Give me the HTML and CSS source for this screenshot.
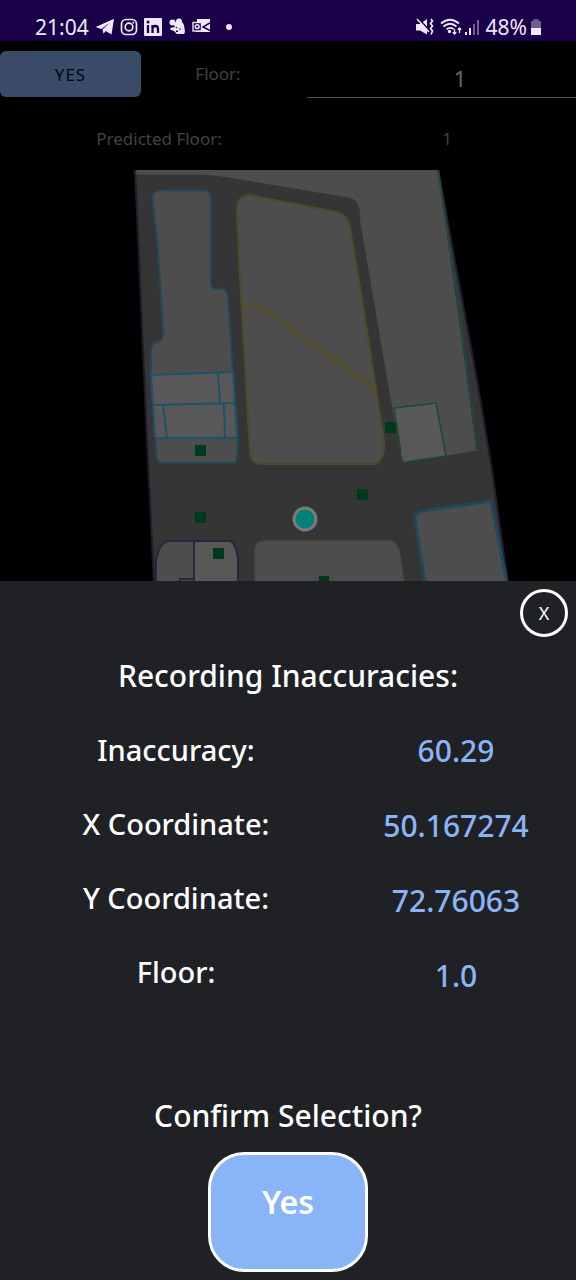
FILE: index.html
```html
<!DOCTYPE html>
<html lang="en">
<head>
<meta charset="utf-8">
<meta name="viewport" content="width=device-width, initial-scale=1">
<title>Recording Inaccuracies</title>
<link rel="stylesheet" href="styles.css">
</head>
<body>
<header class="status">
  <div class="status-left">
    <span class="clock">21:04</span>
    <svg class="icon" viewBox="0 0 18 18"><path d="M0 9 18 1 15.500 16.500 9.700 13 7.500 15.800 6.500 11.500 14 4.500 5 10.800Z" fill="currentColor"/><path d="M0 9 18 1 5.500 11Z" fill="currentColor"/></svg>
    <svg class="icon" viewBox="0 0 18 18" fill="none" stroke="currentColor" stroke-width="1.700"><rect x="1.500" y="1.500" width="15" height="15" rx="4.500"/><circle cx="9" cy="9" r="3.800"/><circle cx="13.300" cy="4.700" r=".6" fill="currentColor" stroke-width="1"/></svg>
    <svg class="icon" viewBox="0 0 18 18"><rect width="18" height="18" rx="1" fill="currentColor"/><g fill="none" stroke="#190048" stroke-width="2.300"><path d="M4 7V15M8.500 7V15M8.500 11Q8.500 8 11.300 8 14 8 14 11V15"/></g><circle cx="4" cy="4" r="1.500" fill="#190048"/></svg>
    <svg class="icon" viewBox="0 0 18 18" fill="currentColor"><circle cx="4.500" cy="4.500" r="3"/><circle cx="11" cy="3.500" r="3"/><path d="M5 5 9 4 13 5 16 7 17 14 16 16H9L6 13 3 12 2 10 7 9Z"/><circle cx="12.500" cy="7" r="3"/><g fill="#190048"><circle cx="8.500" cy="9.500" r=".8"/><circle cx="12" cy="11" r=".8"/><path d="M8 12.500H10V14H8Z"/></g></svg>
    <svg class="icon" viewBox="0 0 18 18"><path d="M5 1H18V14H4V12H9V4H5Z" fill="currentColor"/><rect x="1" y="4.500" width="8.500" height="8.500" fill="#190048" stroke="currentColor" stroke-width="1.400"/><circle cx="5.200" cy="8.700" r="1.900" fill="none" stroke="currentColor" stroke-width="1.500"/><path d="M18 5 11 9 18 12.500" fill="none" stroke="#190048" stroke-width="1.500"/></svg>
    <span class="dot"></span>
  </div>
  <div class="status-right">
    <svg class="mute" viewBox="0 0 18 18"><path d="M0 6H4L11 1V16.500L4 12.500H0Z" fill="currentColor"/><path d="M2 0 13 12" stroke="#190048" stroke-width="1.600"/><path d="M1 1 13 14" stroke="currentColor" stroke-width="1.500"/><path d="M15 1 16.500 3 14.500 5.500 16.500 8 14.500 10.500 16.500 13 15 16.500" fill="none" stroke="currentColor" stroke-width="1.700"/></svg>
    <svg class="wifi" viewBox="0 0 22 18" fill="none" stroke="currentColor" stroke-width="1.800"><path d="M1 5.500Q10 -2 19 5.500M3.500 8.500Q10 3 16.500 8.500M6.500 11.300Q10 8.500 13.500 11"/><circle cx="9.500" cy="13.500" r=".8" fill="currentColor"/><g stroke-width="1.300"><path d="M14.500 11V16M12.800 14.300 14.500 16 16.200 14.300M19.500 15V10M17.800 11.700 19.500 10 21.200 11.700"/></g></svg>
    <svg class="signal" viewBox="0 0 16 18" fill="currentColor"><path d="M1 14H3V17H1ZM5 10H7V17H5Z"/><path d="M9 6H11V17H9ZM13 2H15V17H13Z" opacity=".4"/></svg>
    <span class="battery-text">48%</span>
    <svg class="battery" viewBox="0 0 12 18" fill="currentColor"><path d="M3.500 1H8.500V3H11V11H1V3H3.500Z" opacity=".4"/><path d="M1 10H11V17H1Z"/></svg>
  </div>
</header>
<main>
  <div class="controls">
    <button class="record" type="button">YES</button>
    <label class="floor-label" for="floor">Floor:</label>
    <input class="floor-input" id="floor" type="text" value="1">
  </div>
  <div class="prediction">
    <label for="predicted">Predicted Floor:</label>
    <output id="predicted">1</output>
  </div>
  <svg class="map" viewBox="0 170 576 411" role="img" aria-label="Floor map">
    <path d="M135 169H438L477 380 492 470 508 583H154L147 440Z" fill="#353535" stroke="#211c2d" stroke-width="2"/>
    <path d="M136 169H438L458 310 477 451 405 463Q402 463 401 458L386 375 360 223 359 209Q357 199 348 198L222 177 200 175H136Z" fill="#4d4d4d" stroke="#263e36" stroke-width="1"/>
    <path d="M438 170 459 305 477 451" fill="none" stroke="#284440" stroke-width="2"/>
    <path d="M161 190.500H204Q211 191 211 199V282Q211 289 217 289L222 288Q227 289 228 297L233 375 238 438Q237 461 235 463H161Q158 463 157 458L155 438 151 372V350Q152 341 160 341Q164 338 163 327L158 250 153 202Q150 191 161 190Z" fill="#4d4d4d" stroke="#214957" stroke-width="2"/>
    <path d="M151 375 233 372 237 437H155Z" fill="#585858"/>
    <path d="M151 375 233 372M153 405 235 403M155 438H237M151 373 155 438M233 372 237 438M218 373 220 403M163 406 167 438M224 403 225 438" fill="none" stroke="#1b536c" stroke-width="2"/>
    <path d="M249 195 337 212Q348 215 350 227L363 305 384 440Q385 459 376 464H260Q251 463 250 452L240 280 237 213Q236 196 249 195Z" fill="#4d4d4d" stroke="#4d4a29" stroke-width="2"/>
    <path d="M244 309Q252 300 260 307L376 389" fill="none" stroke="#575020" stroke-width="3"/>
    <path d="M394 408 436 403 446 456 406 462 401 453Z" fill="#585858"/>
    <path d="M394 408 436 403 446 456 406 462M394 408 401 453" fill="none" stroke="#1b4934" stroke-width="1.500"/>
    <path d="M425 582 415 520Q414 513 421 511L491 502 507 582Z" fill="#4d4d4d"/>
    <path d="M425 583 415 520Q414 513 421 511L491 501 507 583" fill="none" stroke="#1f475d" stroke-width="3"/>
    <path d="M156 581V561Q159 543 168 541H230Q236 543 238 559V581Z" fill="#4d4d4d"/>
    <path d="M194 541H230Q236 543 238 559V581H194Z" fill="#585858"/>
    <path d="M156 581V561Q159 543 168 541H230Q236 543 238 559V581M194 541V581M180 581V579H194" fill="none" stroke="#2c253b" stroke-width="2"/>
    <path d="M255 583V551Q255 541 265 541H390Q398 542 400 556L404 583Z" fill="#4d4d4d" stroke="#4b4937" stroke-width="1.500"/>
    <path d="M195 445H206V456H195ZM195 512H206V523H195ZM213 548H224V559H213ZM385 422H396V433H385ZM357 489H368V500H357ZM319 576H329V581H319Z" fill="#00391b"/>
    <circle cx="305" cy="519" r="11" fill="#00827c" stroke="#7a7a7a" stroke-width="3"/>
  </svg>
  <section class="sheet">
    <button class="close" type="button" aria-label="Close">X</button>
    <h1 class="title">Recording Inaccuracies:</h1>
    <div class="readings">
      <div class="names">
        <label for="inaccuracy">Inaccuracy:</label>
        <label for="x">X Coordinate:</label>
        <label for="y">Y Coordinate:</label>
        <label for="level">Floor:</label>
      </div>
      <div class="values">
        <output id="inaccuracy">60.29</output>
        <output id="x">50.167274</output>
        <output id="y">72.76063</output>
        <output id="level">1.0</output>
      </div>
    </div>
    <h2 class="question">Confirm Selection?</h2>
    <button class="confirm" type="button">Yes</button>
  </section>
</main>
</body>
</html>
```
FILE: styles.css
```css
* { box-sizing: border-box; }
body {
  margin: 0;
  background: #000;
  color: #fff;
  font-family: "Noto Sans", sans-serif;
}
button, input { font-family: inherit; }
.status {
  display: flex;
  justify-content: space-between;
  height: 41px;
  padding: 12px 34px 0 35px;
  background: #190048;
  color: #efe8fb;
  font-size: 21px;
  line-height: 30px;
}
.status-left, .status-right { display: flex; align-items: center; height: 30px; }
.status-left { gap: 6px; }
.clock { margin-right: 1px; }
.icon { width: 18px; height: 18px; }
.dot { width: 6px; height: 6px; margin-left: 10px; border-radius: 50%; background: currentColor; }
.mute { width: 18px; height: 18px; margin-right: 6px; }
.wifi { width: 22px; height: 18px; margin-right: 2px; }
.signal { width: 16px; height: 18px; margin-right: 6px; }
.battery { width: 12px; height: 18px; margin-left: 3px; }
.controls {
  display: grid;
  grid-template-columns: 141fr 154fr 269fr;
  column-gap: 6px;
  height: 69px;
  padding-top: 10px;
  color: #424242;
  font-size: 17px;
}
.record {
  height: 46px;
  border: 0;
  border-radius: 6px;
  background: #3a4b67;
  color: #05080d;
  font-size: 17px;
  letter-spacing: 1px;
}
.floor-label { padding-right: 12px; line-height: 46px; text-align: center; }
.floor-input {
  width: 100%;
  height: 47px;
  padding: 8px 0 0 37px;
  border: 0;
  border-bottom: 1px solid #555;
  border-radius: 0;
  background: transparent;
  color: #666;
  font-size: 22px;
  text-align: center;
}
.prediction {
  display: grid;
  grid-template-columns: 318fr 258fr;
  height: 60px;
  color: #424242;
  font-size: 17px;
  line-height: 58px;
  text-align: center;
}
.map { display: block; width: 100%; height: auto; }
.sheet {
  display: flex;
  flex-direction: column;
  align-items: center;
  padding: 8px 8px 8px;
  background: #202125;
}
.close {
  align-self: flex-end;
  width: 48px;
  height: 48px;
  padding: 0;
  border: 3px solid #fff;
  border-radius: 50%;
  background: transparent;
  color: #fff;
  font-size: 18px;
}
.title, .question {
  margin: 0;
  font-size: 30px;
  font-weight: 500;
  line-height: 42px;
}
.title { margin: 18px 0 16px; }
.readings {
  display: grid;
  grid-template-columns: 336fr 224fr;
  width: 100%;
  font-weight: 500;
  text-align: center;
}
.names, .values { display: flex; flex-direction: column; }
.names { font-size: 29px; line-height: 74px; }
.values { color: #8ab4f8; font-size: 30px; line-height: 75px; }
.question { margin: 82px 0 15px; }
.confirm {
  width: 160px;
  height: 120px;
  padding: 0 0 22px;
  border: 3px solid #fff;
  border-radius: 36px;
  background: #8ab4f8;
  color: #fff;
  font-size: 32px;
  font-weight: 600;
}
```
